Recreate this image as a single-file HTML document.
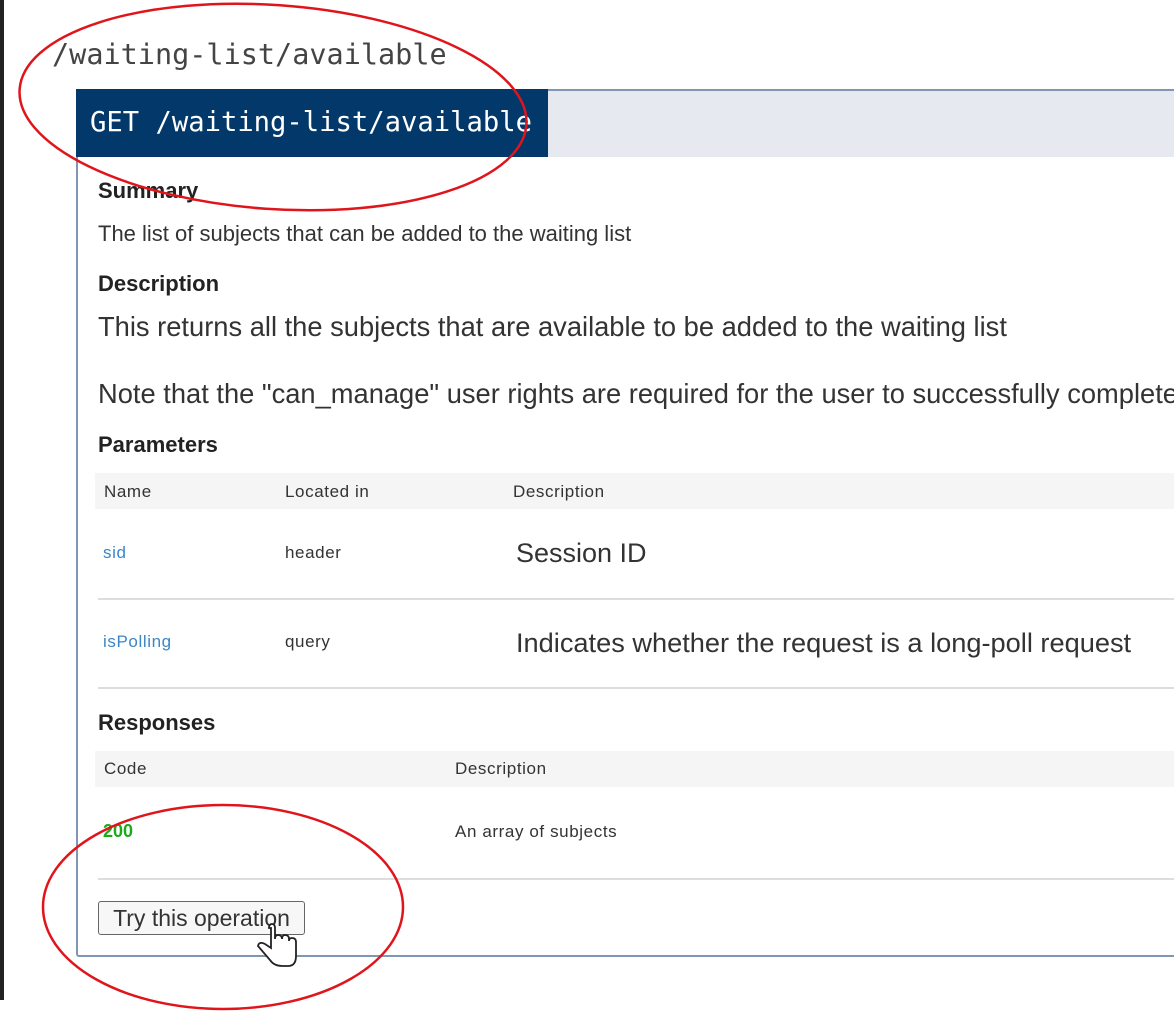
<!DOCTYPE html>
<html><head><meta charset="utf-8"><style>
*{margin:0;padding:0;box-sizing:border-box}
body{width:1174px;height:1016px;background:#fff;position:relative;overflow:hidden;font-family:"Liberation Sans",sans-serif;color:#222}
.a{position:absolute;white-space:nowrap}
.mono{font-family:"DejaVu Sans Mono","Liberation Mono",monospace}
.b{font-weight:bold;font-size:22px;color:#222}
.s{font-size:17px;letter-spacing:0.6px;color:#333}
</style></head><body>
<div class="a" style="left:0;top:0;width:4px;height:1000px;background:#222"></div>
<div class="a mono" style="left:52px;top:38px;font-size:28.5px;color:#444">/waiting-list/available</div>
<div class="a" style="left:76px;top:89px;width:1110px;height:868px;border:2px solid #7f97b3;border-radius:3px;background:#fff"></div>
<div class="a" style="left:78px;top:91px;width:1100px;height:66px;background:#e6eaf0"></div>
<div class="a" style="left:76px;top:89px;width:472px;height:68px;background:#03386a"></div>
<div class="a mono" style="left:90px;top:107px;font-size:27.2px;color:#fff">GET /waiting-list/available</div>
<div class="a b" style="left:98px;top:178px">Summary</div>
<div class="a" style="left:98px;top:221px;font-size:22px;color:#333">The list of subjects that can be added to the waiting list</div>
<div class="a b" style="left:98px;top:271px">Description</div>
<div class="a" style="left:98px;top:311px;font-size:27.3px;color:#333">This returns all the subjects that are available to be added to the waiting list</div>
<div class="a" style="left:98px;top:378px;font-size:27.3px;color:#333">Note that the "can_manage" user rights are required for the user to successfully complete</div>
<div class="a b" style="left:98px;top:432px">Parameters</div>
<div class="a" style="left:95px;top:473px;width:1090px;height:36px;background:#f5f5f5"></div>
<div class="a s" style="left:104px;top:482px">Name</div>
<div class="a s" style="left:285px;top:482px">Located in</div>
<div class="a s" style="left:513px;top:482px">Description</div>
<div class="a s" style="left:103px;top:543px;color:#3b86c7">sid</div>
<div class="a s" style="left:285px;top:543px">header</div>
<div class="a" style="left:516px;top:538px;font-size:27px;color:#333">Session ID</div>
<div class="a" style="left:98px;top:598px;width:1090px;height:2px;background:#ddd"></div>
<div class="a s" style="left:103px;top:632px;color:#3b86c7">isPolling</div>
<div class="a s" style="left:285px;top:632px">query</div>
<div class="a" style="left:516px;top:627px;font-size:27.2px;color:#333">Indicates whether the request is a long-poll request</div>
<div class="a" style="left:98px;top:687px;width:1090px;height:2px;background:#ddd"></div>
<div class="a b" style="left:98px;top:710px">Responses</div>
<div class="a" style="left:95px;top:751px;width:1090px;height:36px;background:#f5f5f5"></div>
<div class="a s" style="left:104px;top:759px">Code</div>
<div class="a s" style="left:455px;top:759px">Description</div>
<div class="a" style="left:103px;top:821px;font-size:18px;font-weight:bold;color:#1aaa1a">200</div>
<div class="a s" style="left:455px;top:822px">An array of subjects</div>
<div class="a" style="left:98px;top:878px;width:1090px;height:2px;background:#ddd"></div>
<div class="a" style="left:98px;top:901px;width:207px;height:34px;border:1px solid #666;border-radius:3px;background:#f7f7f7;font-size:23px;color:#333;text-align:center;line-height:32px">Try this operation</div>
<svg class="a" style="left:0;top:0" width="1174" height="1016">
<ellipse cx="273" cy="107" rx="254" ry="102" fill="none" stroke="#e0151b" stroke-width="2.5" transform="rotate(4 273 107)"/>
<ellipse cx="223" cy="907" rx="180" ry="102" fill="none" stroke="#e0151b" stroke-width="2.5"/>
<path d="M271 928 v20 l-6 -4 q-6 -3 -7 2 l12 14 q4 6 12 6 h6 q8 0 8 -10 v-14 q0 -4 -4 -4 q-3 0 -3 3 v-2 q0 -4 -4 -4 q-3 0 -3 4 q0 -4 -4 -4 q-3 0 -3 4 v-11 q0 -4 -3 -4 q-3 0 -3 4 z" fill="#fff" stroke="#222" stroke-width="1.8"/>
</svg>
</body></html>
